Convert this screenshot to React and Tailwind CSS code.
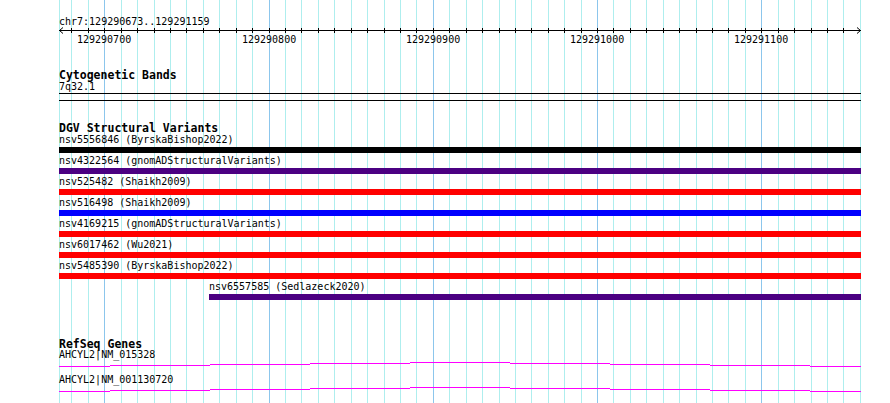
import React from "react";

const LEFT = 59;
const W = 802;

const grid = [];
for (let k = -2; k <= 46; k++) {
  grid.push({ x: Math.round(104.3 + k * 16.425), dark: k % 10 === 0, k });
}

const labels = [
  { k: 0, t: "129290700" },
  { k: 10, t: "129290800" },
  { k: 20, t: "129290900" },
  { k: 30, t: "129291000" },
  { k: 40, t: "129291100" },
];

const variants = [
  { label: "nsv5556846 (ByrskaBishop2022)", color: "bg-black", start: 0 },
  { label: "nsv4322564 (gnomADStructuralVariants)", color: "bg-[#4b0082]", start: 0 },
  { label: "nsv525482 (Shaikh2009)", color: "bg-[#ff0000]", start: 0 },
  { label: "nsv516498 (Shaikh2009)", color: "bg-[#0000ff]", start: 0 },
  { label: "nsv4169215 (gnomADStructuralVariants)", color: "bg-[#ff0000]", start: 0 },
  { label: "nsv6017462 (Wu2021)", color: "bg-[#ff0000]", start: 0 },
  { label: "nsv5485390 (ByrskaBishop2022)", color: "bg-[#ff0000]", start: 0 },
  { label: "nsv6557585 (Sedlazeck2020)", color: "bg-[#4b0082]", start: 150 },
];

const segs = [
  [0, 51, 6],
  [51, 151, 5],
  [151, 251, 4],
  [251, 351, 3],
  [351, 451, 2],
  [451, 551, 3],
  [551, 651, 4],
  [651, 751, 5],
  [751, 802, 6],
];

function GeneLine() {
  return (
    <svg width={W} height={15} className="block" shapeRendering="crispEdges">
      {segs.map(([a, b, y], i) => (
        <line key={i} x1={a} x2={b} y1={y + 0.5} y2={y + 0.5} stroke="#ff00ff" strokeWidth="1" />
      ))}
    </svg>
  );
}

export default function App() {
  return (
    <div className="relative w-[890px] h-[403px] bg-white overflow-hidden text-black font-['DejaVu_Sans_Mono','Liberation_Mono',monospace]">
      <svg className="absolute left-0 top-0" width="890" height="403" shapeRendering="crispEdges">
        <line x1={59.5} x2={59.5} y1={0} y2={403} stroke="#aeeeee" strokeWidth="1" />
        {grid.map((g) => (
          <line
            key={g.k}
            x1={g.x + 0.5}
            x2={g.x + 0.5}
            y1={0}
            y2={403}
            stroke={g.dark ? "#8cc6ec" : "#aeeeee"}
            strokeWidth="1"
          />
        ))}
      </svg>

      <div className="relative pl-[59px] w-[861px]">
        <div className="pt-[17px] text-[10px] leading-[10px] whitespace-pre">chr7:129290673..129291159</div>

        <svg width={W + 1} height={8} className="block" shapeRendering="crispEdges">
          <line x1={0} x2={W} y1={3.5} y2={3.5} stroke="#000" strokeWidth="1" />
          <polyline points="4,0.5 0.5,3.5 4,6.5" fill="none" stroke="#000" strokeWidth="1" shapeRendering="auto" />
          <polyline points={`${W - 4},0.5 ${W - 0.5},3.5 ${W - 4},6.5`} fill="none" stroke="#000" strokeWidth="1" shapeRendering="auto" />
          {grid
            .filter((g) => g.k <= 45)
            .map((g) => (
              <line key={g.k} x1={g.x - LEFT + 0.5} x2={g.x - LEFT + 0.5} y1={1} y2={6} stroke="#000" strokeWidth="1" />
            ))}
        </svg>

        <div className="relative h-[10px] text-[10px] leading-[10px]">
          {labels.map((l) => {
            const x = Math.round(104.3 + l.k * 16.425) - LEFT;
            return (
              <span key={l.k} className="absolute top-0 whitespace-pre" style={{ left: x - 27 }}>
                {l.t}
              </span>
            );
          })}
        </div>

        <div className="mt-[24px] text-[11.5px] leading-[12px] font-bold whitespace-pre">Cytogenetic Bands</div>
        <div className="mt-px text-[10px] leading-[10px] whitespace-pre">7q32.1</div>
        <div className="mt-px h-px w-[802px] bg-black" />
        <div className="mt-[6px] h-px w-[802px] bg-black" />

        <div className="mt-[21px] text-[11.5px] leading-[12px] font-bold whitespace-pre">DGV Structural Variants</div>
        <div className="mt-px flex flex-col w-[802px]">
          {variants.map((v, i) => (
            <div key={i} className="flex flex-col pb-[3px]" style={{ paddingLeft: v.start }}>
              <div className="text-[10px] leading-[10px] whitespace-pre">{v.label}</div>
              <div className={`mt-[2px] h-[6px] ${v.color}`} />
            </div>
          ))}
        </div>

        <div className="mt-[35px] text-[11.5px] leading-[12px] font-bold whitespace-pre">RefSeq Genes</div>
        <div className="text-[10px] leading-[10px] whitespace-pre">AHCYL2|NM_015328</div>
        <GeneLine />
        <div className="text-[10px] leading-[10px] whitespace-pre">AHCYL2|NM_001130720</div>
        <GeneLine />
      </div>
    </div>
  );
}
